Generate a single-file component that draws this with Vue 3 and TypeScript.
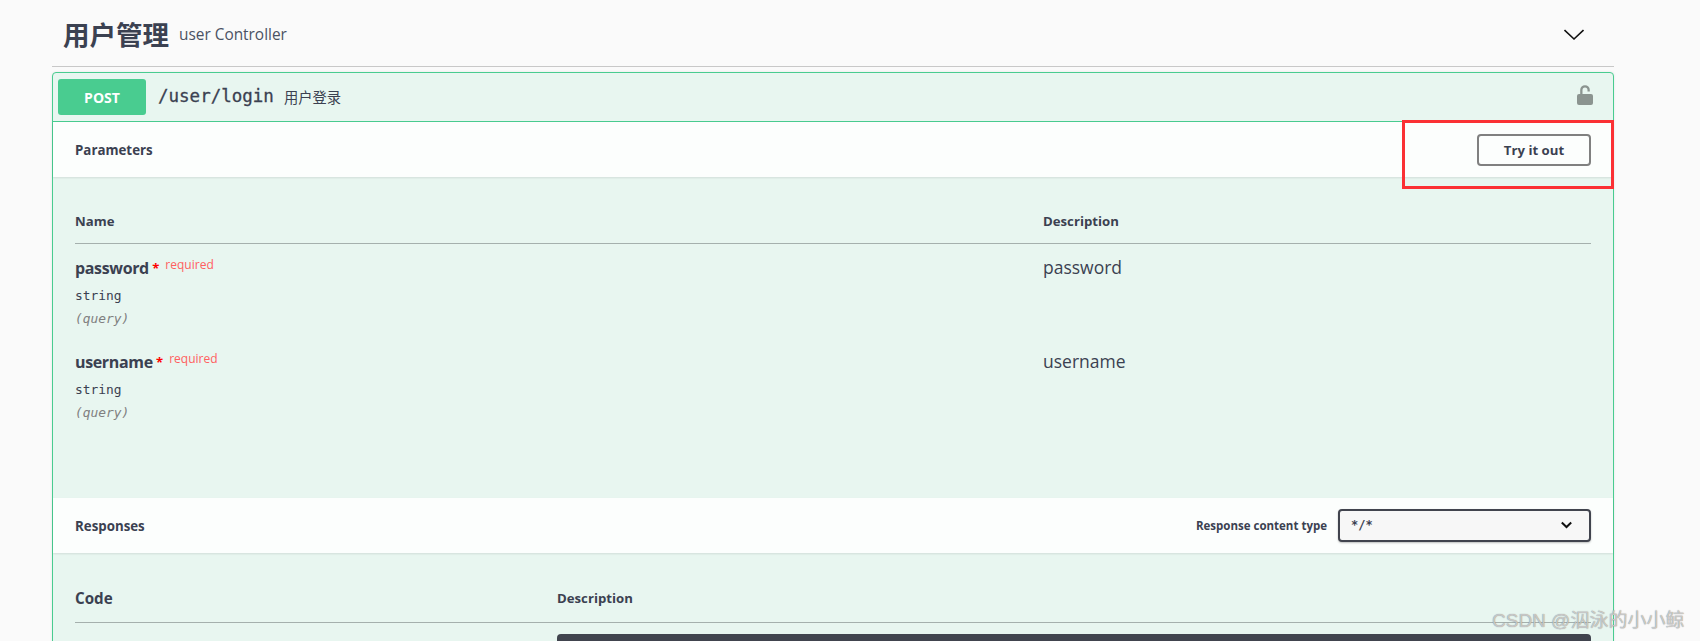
<script setup lang="ts">
interface Param { name: string; type: string; where: string }
const params: Param[] = [
  { name: 'password', type: 'string', where: '(query)' },
  { name: 'username', type: 'string', where: '(query)' },
]
</script>

<template>
  <div class="page">
    <div class="tag">
      <div class="tag-title">
        <span class="tag-name">用户管理</span>
        <span class="tag-desc">user Controller</span>
      </div>
      <svg class="tag-arrow" width="20" height="12" viewBox="0 0 20 12"><path d="M0.5 1 L10 10 L19.5 1" fill="none" stroke="#111" stroke-width="1.6" /></svg>
    </div>
    <div class="opblock">
      <div class="summary">
        <div class="method">POST</div>
        <span class="path">/user/login</span>
        <span class="summary-desc">用户登录</span>
        <svg class="lock" width="16" height="20" viewBox="0 0 16 20"><path d="M3.2 9.5 V5 a4.8 4.8 0 0 1 9.6 0 V6.5 h-2.3 V5 a2.5 2.5 0 0 0 -5 0 V9.5 Z" fill="#8b9490" /><rect x="0" y="9" width="16" height="11" rx="2" fill="#8b9490" /></svg>
      </div>
      <div class="section-head">
        <span class="section-title">Parameters</span>
        <button class="try">Try it out</button>
      </div>
      <div class="params">
        <div class="table-head">
          <span class="col-name">Name</span>
          <span>Description</span>
        </div>
        <div v-for="p in params" :key="p.name" class="param">
          <div class="col-name">
            <div class="param-name">{{ p.name }}<span class="star"> *</span><span class="req">required</span></div>
            <div class="param-type">{{ p.type }}</div>
            <div class="param-in">{{ p.where }}</div>
          </div>
          <div class="param-desc">{{ p.name }}</div>
        </div>
      </div>
      <div class="section-head">
        <span class="section-title">Responses</span>
        <div class="content-type">
          <span class="ct-label">Response content type</span>
          <div class="select">
            <span>*/*</span>
            <svg width="11" height="8" viewBox="0 0 11 8"><path d="M0.8 1.5 L5.5 6 L10.2 1.5" fill="none" stroke="#111" stroke-width="2" /></svg>
          </div>
        </div>
      </div>
      <div class="responses">
        <div class="resp-head">
          <span class="col-code code-title">Code</span>
          <span>Description</span>
        </div>
        <div class="resp-row">
          <span class="col-code resp-code">200</span>
          <div class="resp-block"></div>
        </div>
      </div>
    </div>
    <div class="annotation"></div>
    <div class="watermark">CSDN @泅泳的小小鲸</div>
  </div>
</template>

<style>
html, body { margin: 0; background: #fafafa; overflow: hidden; }
</style>

<style scoped>
.page {
  position: relative;
  width: 1700px;
  height: 641px;
  overflow: hidden;
  padding: 0 86px 0 52px;
  box-sizing: border-box;
  background: #fafafa;
  color: #3b4151;
  font-family: "Open Sans", "Noto Sans CJK SC", sans-serif;
}
.tag {
  height: 66px;
  margin-bottom: 5px;
  border-bottom: 1px solid #c8c8c8;
  display: flex;
  align-items: center;
  justify-content: space-between;
  padding: 0 30px 0 11px;
}
.tag-title { display: flex; align-items: center; }
.tag-name { font-size: 26.5px; font-weight: 700; font-family: "Noto Sans CJK SC", sans-serif; line-height: 40px; position: relative; top: 1px; }
.tag-desc { margin-left: 10px; font-size: 15.4px; color: #4b5263; position: relative; top: 1px; }
.tag-arrow { position: relative; top: 2px; }
.opblock {
  border: 1px solid #49cc90;
  border-radius: 4px;
  background: #e8f6f0;
  height: 640px;
  box-sizing: border-box;
  box-shadow: 0 0 3px rgba(0, 0, 0, 0.08);
}
.summary {
  height: 49px;
  box-sizing: border-box;
  border-bottom: 1px solid #49cc90;
  display: flex;
  align-items: center;
  padding: 0 20px 2px 5px;
}
.method {
  width: 88px;
  height: 36px;
  border-radius: 3px;
  background: #49cc90;
  color: #fff;
  font-size: 14px;
  font-weight: 700;
  display: flex;
  align-items: center;
  justify-content: center;
  position: relative;
  top: 1px;
}
.path {
  margin-left: 12px;
  font-family: "DejaVu Sans Mono", monospace;
  font-size: 17.5px;
  font-weight: 400;
  -webkit-text-stroke: 0.3px #3b4151;
}
.summary-desc { margin-left: 10px; font-size: 14.3px; font-family: "Noto Sans CJK SC", sans-serif; }
.lock { margin-left: auto; position: relative; top: -1px; }
.section-head {
  height: 55px;
  box-sizing: border-box;
  background: rgba(255, 255, 255, 0.85);
  box-shadow: 0 1px 2px rgba(0, 0, 0, 0.1);
  display: flex;
  align-items: center;
  justify-content: space-between;
  padding: 0 22px;
}
.section-title { font-size: 13.3px; font-weight: 700; }
.try {
  width: 114px;
  height: 32px;
  border: 2px solid #808080;
  border-radius: 4px;
  background: transparent;
  color: #3b4151;
  font-family: inherit;
  font-size: 13.2px;
  font-weight: 700;
  padding: 0;
}
.params {
  height: 321px;
  box-sizing: border-box;
  padding: 22px 22px 0;
}
.table-head {
  height: 45px;
  box-sizing: border-box;
  border-bottom: 1px solid #a5b0ad;
  display: flex;
  align-items: center;
  font-size: 13.2px;
  font-weight: 700;
  padding-bottom: 1px;
}
.col-name { width: 968px; flex: none; }
.param { display: flex; height: 94px; padding-top: 13px; box-sizing: border-box; }
.param-name { font-size: 16px; font-weight: 700; line-height: 22px; letter-spacing: -0.35px; }
.star { color: #f00; font-size: 13px; position: relative; top: -1px; letter-spacing: 0; }
.req { color: #ff6060; font-size: 12px; font-weight: 400; margin-left: 6px; position: relative; top: -5px; letter-spacing: 0; }
.param-type { font-family: "DejaVu Sans Mono", monospace; font-size: 12.9px; line-height: 16px; margin-top: 7px; }
.param-in { font-family: "DejaVu Sans Mono", monospace; font-size: 12.9px; font-style: italic; color: #808080; line-height: 16px; margin-top: 7px; }
.param-desc { font-size: 17.5px; line-height: 22px; margin-top: -1px; }
.content-type { display: flex; align-items: center; }
.ct-label { font-size: 11.5px; font-weight: 700; margin-right: 11px; }
.select {
  width: 253px;
  height: 33px;
  box-sizing: border-box;
  border: 2px solid #41444e;
  border-radius: 4px;
  background: #f7f7f7;
  display: flex;
  align-items: center;
  justify-content: space-between;
  padding: 0 17px 2px 11px;
  font-family: "DejaVu Sans Mono", monospace;
  font-size: 12px;
  font-weight: 700;
  box-shadow: 0 1px 2px rgba(0, 0, 0, 0.25);
}
.responses { padding: 21px 22px 0; }
.resp-head {
  height: 49px;
  box-sizing: border-box;
  border-bottom: 1px solid #a5b0ad;
  display: flex;
  align-items: center;
  font-size: 13.2px;
  font-weight: 700;
}
.col-code { width: 482px; flex: none; }
.code-title { font-size: 15.2px; }
.resp-row { display: flex; padding-top: 11px; }
.resp-code { font-family: "DejaVu Sans Mono", monospace; font-size: 12px; margin-top: -4px; padding-top: 11px; }
.resp-block { flex: 1; height: 80px; background: #41444e; border-radius: 4px; }
.annotation {
  position: absolute;
  left: 1402px;
  top: 120px;
  width: 212px;
  height: 69px;
  box-sizing: border-box;
  border: 3px solid #fb3034;
}
.watermark {
  position: absolute;
  left: 1492px;
  top: 608px;
  font-family: "Liberation Sans", "Noto Sans CJK SC", sans-serif;
  font-size: 19px;
  line-height: 26px;
  color: rgba(255, 255, 255, 0.6);
  text-shadow: 0 0 0.8px #666;
  white-space: nowrap;
}
</style>
